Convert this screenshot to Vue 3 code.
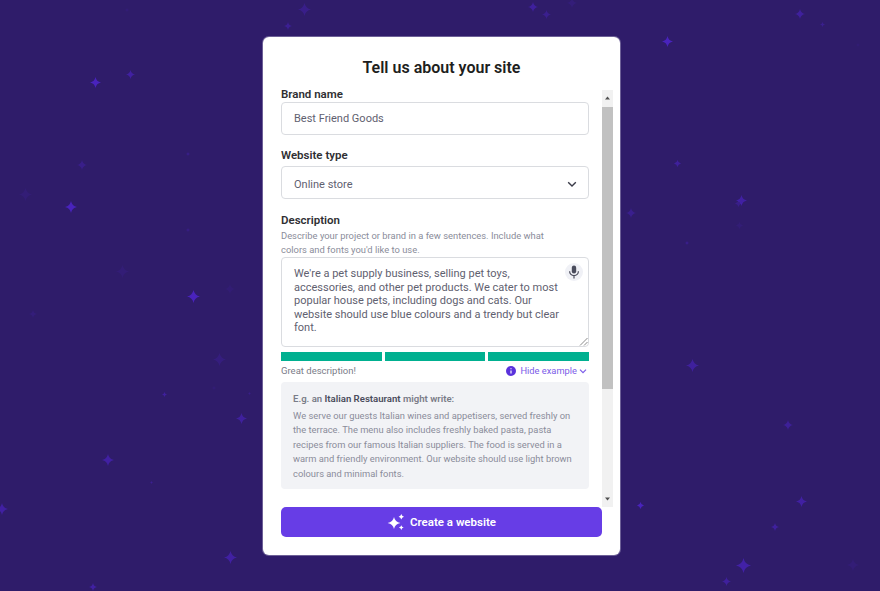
<script setup>
const stars = [
  [95,82,11,.8],[130,74,9,.55],[82,165,10,.3],[25,194,13,.12],[71,207,12,.8],[122,271,13,.12],[193,296,13,.8],[230,289,10,.1],[188,230,4,.25],[188,154,4,.3],[127,10,4,.12],
  [33,314,8,.15],[219,359,13,.2],[164,394,5,.5],[214,388,4,.12],[249,393,3,.3],[241,418,11,.5],[108,460,12,.55],[151,482,3,.4],[2,509,12,.55],[230,557,13,.55],[93,587,8,.55],
  [800,14,10,.5],[822,24,5,.35],[667,41,11,.8],[677,163,7,.5],[741,200,11,.55],[738,203,7,.3],[631,213,10,.35],[739,225,7,.12],[687,243,4,.35],[858,45,4,.1],
  [692,365,13,.5],[788,425,10,.45],[640,505,7,.8],[801,501,11,.55],[775,527,8,.5],[743,565,15,.6],[726,581,9,.5],[853,565,12,.12],
  [304,9,13,.3],[288,26,8,.4],[533,7,10,.5],[546,14,9,.35],[572,3,10,.15]
]
const starStyle = s => ({ left: s[0] - s[2] / 2 + 'px', top: s[1] - s[2] / 2 + 'px', width: s[2] + 'px', height: s[2] + 'px', opacity: s[3] })
</script>

<template>
  <main class="page">
    <svg v-for="(s, i) in stars" :key="i" class="star" :style="starStyle(s)" viewBox="0 0 20 20"><path d="M10 0Q11.6 8.4 20 10Q11.6 11.6 10 20Q8.4 11.6 0 10Q8.4 8.4 10 0Z"/></svg>
    <section class="card">
      <h1>Tell us about your site</h1>
      <div class="scroller">
        <div class="form">
          <div class="label">Brand name</div>
          <div class="box brand">Best Friend Goods</div>
          <div class="label type-label">Website type</div>
          <div class="box select">
            <span>Online store</span>
            <svg width="12" height="12" viewBox="0 0 12 12"><path d="M2.2 4.2L6 8l3.8-3.8" fill="none" stroke="#3a3b48" stroke-width="1.4"/></svg>
          </div>
          <div class="label desc-label">Description</div>
          <p class="hint">Describe your project or brand in a few sentences. Include what<br>colors and fonts you'd like to use.</p>
          <div class="box area">
            <div>We're a pet supply business, selling pet toys,<br>accessories, and other pet products. We cater to most<br>popular house pets, including dogs and cats. Our<br>website should use blue colours and a trendy but clear<br>font.</div>
            <span class="mic">
              <svg width="12" height="14" viewBox="0 0 12 14"><rect x="3.8" y="0.5" width="4.4" height="8" rx="2.2" fill="#4a4c5c"/><path d="M1.6 6.2a4.4 4.4 0 0 0 8.8 0M6 10.6v2.9" fill="none" stroke="#4a4c5c" stroke-width="1.2"/></svg>
            </span>
            <svg class="grip" width="9" height="9" viewBox="0 0 9 9"><path d="M8.5 1L1 8.5M8.5 5L5 8.5" stroke="#8a8a8a" stroke-width="1"/></svg>
          </div>
          <div class="bars"><i></i><i></i><i></i></div>
          <div class="status">
            <span class="great">Great description!</span>
            <span class="toggle">
              <svg width="10" height="10" viewBox="0 0 11 11"><circle cx="5.5" cy="5.5" r="5.5" fill="#5a32dc"/><path d="M5.5 5v3.2M5.5 2.4v1.3" stroke="#fff" stroke-width="1.3"/></svg>
              <span class="hide">Hide example</span>
              <svg class="caret" width="8" height="8" viewBox="0 0 8 8"><path d="M1 2.7l3 3 3-3" fill="none" stroke="#7b5ce8" stroke-width="1.2"/></svg>
            </span>
          </div>
          <div class="example">
            <div class="eg">E.g. an <b>Italian Restaurant</b> might write:</div>
            <p>We serve our guests Italian wines and appetisers, served freshly on<br>the terrace. The menu also includes freshly baked pasta, pasta<br>recipes from our famous Italian suppliers. The food is served in a<br>warm and friendly environment. Our website should use light brown<br>colours and minimal fonts.</p>
          </div>
        </div>
        <div class="scrollbar">
          <svg width="11" height="17" viewBox="0 0 11 17"><path d="M3 9.5h5L5.5 6.5z" fill="#505050"/></svg>
          <div class="track"><div class="thumb"></div></div>
          <svg width="11" height="17" viewBox="0 0 11 17"><path d="M3 7.5h5L5.5 10.5z" fill="#505050"/></svg>
        </div>
      </div>
      <button class="cta">
        <svg width="18" height="17" viewBox="0 0 18 17"><path d="M7 3Q8 8 13.4 9Q8 10 7 15Q6 10 .6 9Q6 8 7 3Z" fill="#fff"/><path d="M14.3 0Q14.8 2.2 17 2.7Q14.8 3.2 14.3 5.4Q13.8 3.2 11.6 2.7Q13.8 2.2 14.3 0ZM14.3 11.2Q14.8 13.1 16.7 13.6Q14.8 14.1 14.3 16Q13.8 14.1 11.9 13.6Q13.8 13.1 14.3 11.2Z" fill="#fff"/></svg>
        Create a website
      </button>
    </section>
  </main>
</template>

<style scoped>
.page { position: relative; width: 880px; height: 591px; overflow: hidden; background: #2f1c6a; font-family: Roboto, "Liberation Sans", sans-serif; display: flex; box-sizing: border-box; padding: 37px 0 0 263px; }
.star { position: absolute; fill: #5025d1; }
.card { position: relative; box-sizing: border-box; width: 357px; height: 518px; background: #fff; border-radius: 6px; padding: 21px 18px 0; box-shadow: 0 0 0 1px rgba(255,255,255,.3); }
h1 { margin: 0; height: 29px; text-align: center; font-size: 16px; line-height: 19px; font-weight: 600; color: #1d1e20; }
.scroller { display: flex; height: 420px; width: 332px; overflow: hidden; white-space: nowrap; }
.form { width: 308px; flex: none; }
.label { font-size: 11.5px; line-height: 14px; font-weight: 600; color: #2f2f33; }
.box { box-sizing: border-box; width: 308px; border: 1px solid #dadce0; border-radius: 4px; font-size: 11px; color: #5f6170; }
.brand { height: 33px; margin-top: 1px; padding: 0 12px; line-height: 32px; }
.type-label { margin-top: 13px; }
.select { height: 33px; margin-top: 4px; padding: 3px 10px 0 12px; display: flex; align-items: center; justify-content: space-between; }
.desc-label { margin-top: 14px; }
.hint { margin: 2px 0 1px; font-size: 9.4px; line-height: 13.5px; color: #8a8c9a; }
.area { position: relative; height: 90px; padding: 9px 12px; line-height: 13.5px; }
.mic { position: absolute; right: 5px; top: 5px; width: 18px; height: 18px; border-radius: 50%; background: #f0f1f6; display: flex; align-items: center; justify-content: center; }
.grip { position: absolute; right: 0; bottom: 0; }
.bars { display: flex; gap: 3px; margin-top: 5px; }
.bars i { flex: 1; height: 9px; background: #00b090; }
.status { display: flex; justify-content: space-between; align-items: center; height: 17px; margin-top: 1px; font-size: 9.5px; }
.great { color: #7a7c88; }
.toggle { display: flex; align-items: center; gap: 4px; color: #7b5ce8; padding-right: 2px; }
.hide { font-size: 9.3px; }
.caret { margin-left: -2px; }
.example { box-sizing: border-box; height: 107px; margin-top: 3px; background: #f2f3f6; border-radius: 4px; padding: 10px 12px; color: #8a8c9a; font-size: 9.35px; }
.eg { line-height: 13px; font-size: 9.6px; font-weight: 600; color: #7a7c88; }
.eg b { color: #4a4c5c; font-weight: 600; }
.example p { margin: 3.5px 0 0; line-height: 14.5px; }
.scrollbar { width: 11px; margin: 3px 0 0 13px; flex: none; background: #f1f1f1; display: flex; flex-direction: column; }
.track { flex: 1; }
.thumb { height: 282px; background: #c1c1c1; }
.scrollbar svg { flex: none; }
.cta { display: flex; align-items: center; justify-content: center; gap: 5px; width: 321px; height: 30px; margin-top: 0; border: 0; border-radius: 5px; background: #673de6; color: #fff; font: 600 11.5px Roboto, "Liberation Sans", sans-serif; }
</style>
